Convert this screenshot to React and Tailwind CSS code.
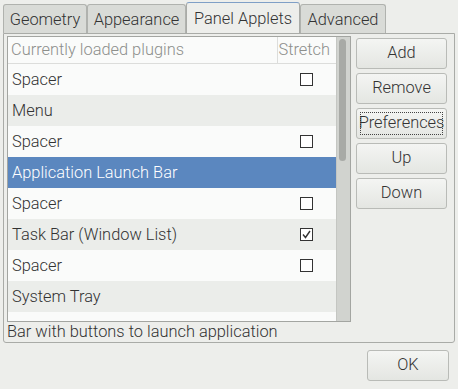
import React from "react";

const rows = [
  { name: "Spacer", check: false },
  { name: "Menu", check: null },
  { name: "Spacer", check: false },
  { name: "Application Launch Bar", check: null, selected: true },
  { name: "Spacer", check: false },
  { name: "Task Bar (Window List)", check: true },
  { name: "Spacer", check: false },
  { name: "System Tray", check: null },
];

const tabs = [
  { label: "Geometry", w: "w-[84px]" },
  { label: "Appearance", w: "w-[99px]" },
  { label: "Panel Applets", w: "w-[114px]", active: true },
  { label: "Advanced", w: "w-[86px]" },
];

const Checkbox = ({ checked }) => (
  <div className="w-[13px] h-[13px] border border-[#333] bg-white relative">
    {checked && (
      <svg className="absolute left-[0px] top-[0px]" width="11" height="11" viewBox="0 0 11 11">
        <path d="M2 5.5 L4.5 8.5 L9 2" fill="none" stroke="#333" strokeWidth="1.4" />
      </svg>
    )}
  </div>
);

const Button = ({ children, focused, className = "" }) => (
  <button
    className={`h-[31px] rounded-[3px] border border-[#b9bbb7] bg-gradient-to-b from-[#f4f5f3] to-[#e4e6e2] text-[#333] text-[16.4px] flex items-center justify-center p-[3px] ${className}`}
  >
    <span
      className={`w-full h-full flex items-center justify-center ${focused ? "border border-dotted border-[#444]" : ""}`}
    >
      {children}
    </span>
  </button>
);

const App = () => {
  return (
    <div
      className="w-[458px] h-[389px] bg-[#edeeeb] text-[#333] overflow-hidden font-light"
      style={{ fontFamily: "Roboto, 'Liberation Sans', sans-serif" }}
    >
      <div className="flex items-end h-[33px] pl-[3px]">
        {tabs.map((t) => (
          <div
            key={t.label}
            className={`${t.w} flex items-center justify-center pt-[2px] text-[16.4px] rounded-t-[3px] border border-b-0 ${
              t.active
                ? "h-[31px] bg-[#edeeeb] border-[#a9aba7] border-t-[#7f9fc6] text-[#333]"
                : "h-[29px] bg-[#d9dbd7] border-[#b0b2ae] text-[#333]"
            }`}
          >
            {t.label}
          </div>
        ))}
      </div>

      <div className="ml-[3px] w-[452px] h-[310px] border border-[#a9aba7] rounded-b-[3px] pl-[3px] pt-[2px]">
        <div className="flex">
          <div className="w-[344px] h-[286px] border border-[#a3a5a1] bg-[#fafbfa] flex">
            <div className="flex-1">
              <div className="h-[27px] flex border-b border-[#dcdddb] text-[#8d8f8c] text-[16.4px]">
                <div className="flex-1 flex items-center pl-[3px]">Currently loaded plugins</div>
                <div className="w-[59px] flex items-center justify-end pr-[6px] border-l border-[#dcdddb]">
                  Stretch
                </div>
              </div>
              {rows.map((r, i) => (
                <div
                  key={i}
                  className={`h-[31px] flex items-center text-[16.4px] ${
                    r.selected
                      ? "bg-[#5b87bf] text-white"
                      : i % 2 === 0
                      ? "bg-[#fafbfa]"
                      : "bg-[#ebedea]"
                  }`}
                >
                  <div className="flex-1 pl-[4px] pt-[1px]">{r.name}</div>
                  <div className="w-[59px] flex justify-center">
                    {r.check !== null && <Checkbox checked={r.check} />}
                  </div>
                </div>
              ))}
            </div>
            <div className="w-[14px] h-full bg-[#d1d3cf] border-l border-[#c4c6c2] pt-[2px] pl-[2px]">
              <div className="w-[7px] h-[122px] rounded-full bg-[#a8aaa6]" />
            </div>
          </div>

          <div className="ml-[5px] pt-[2px] flex flex-col gap-[4px] w-[91px]">
            <Button>Add</Button>
            <Button>Remove</Button>
            <Button focused>Preferences</Button>
            <Button>Up</Button>
            <Button>Down</Button>
          </div>
        </div>
        <div className="h-[21px] flex items-center text-[16.4px]">
          Bar with buttons to launch application
        </div>
      </div>

      <div className="flex justify-end pr-[9px] pt-[7px]">
        <Button className="w-[82px]">OK</Button>
      </div>
    </div>
  );
};

export default App;
